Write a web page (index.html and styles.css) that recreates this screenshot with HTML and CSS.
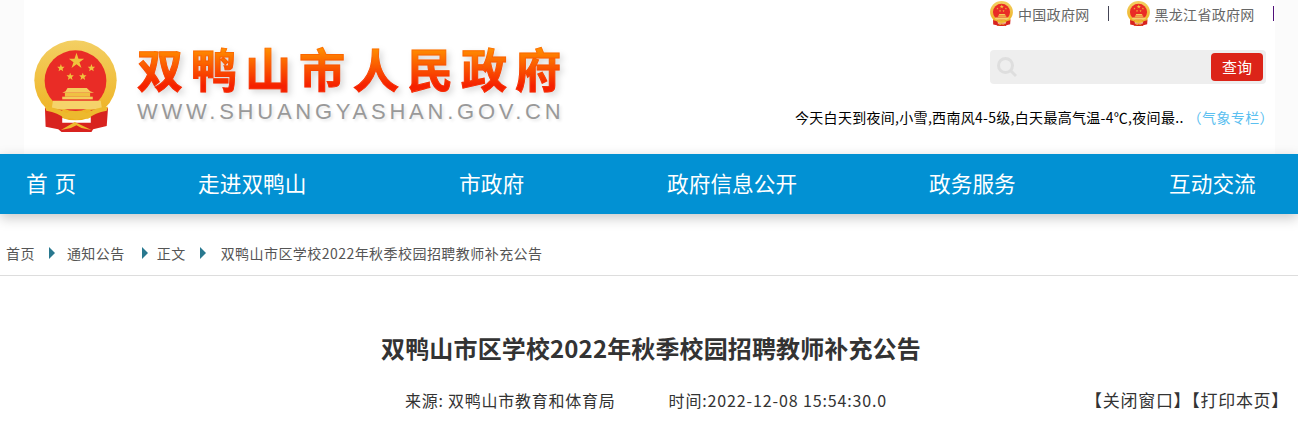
FILE: index.html
```html
<!DOCTYPE html>
<html lang="zh-CN">
<head>
    <meta charset="UTF-8">
    <meta name="viewport" content="width=device-width, initial-scale=1.0">
    <title>双鸭山市区学校2022年秋季校园招聘教师补充公告</title>
    <link rel="stylesheet" href="styles.css">
</head>
<body>
    <svg class="defs" width="0" height="0" aria-hidden="true">
        <defs>
            <linearGradient id="gold" x1="0" y1="0" x2="0" y2="1">
                <stop offset="0" stop-color="#f3cf63"/>
                <stop offset="1" stop-color="#eeb11f"/>
            </linearGradient>
            <symbol id="emblem" viewBox="27 14 250 276" preserveAspectRatio="none">
                <ellipse cx="152" cy="135" rx="124" ry="120" fill="url(#gold)"/>
                <ellipse cx="152" cy="136" rx="93" ry="91" fill="#e92c26"/>
                <path d="M60 218 L112 224 L112 262 L198 262 L198 224 L250 218 L246 272 L205 282 L200 290 L110 290 L100 282 L62 274 Z" fill="#d8231f"/>
                <path fill="#f0c23d" d="M155 52 L161 70 L178 70 L164 81 L170 98 L155 87 L140 98 L146 81 L132 70 L149 70 Z"/>
                <path fill="#f0c23d" d="M108 86 L111 94 L119 94 L113 100 L115 108 L108 103 L101 108 L103 100 L97 94 L105 94 Z"/>
                <path fill="#f0c23d" d="M200 86 L203 94 L211 94 L205 100 L207 108 L200 103 L193 108 L195 100 L189 94 L197 94 Z"/>
                <path fill="#f0c23d" d="M136 112 L139 120 L147 120 L141 126 L143 134 L136 129 L129 134 L131 126 L125 120 L133 120 Z"/>
                <path fill="#f0c23d" d="M174 112 L177 120 L185 120 L179 126 L181 134 L174 129 L167 134 L169 126 L163 120 L171 120 Z"/>
                <path fill="#f3cd5c" d="M128 158 L186 158 L196 168 L208 172 L112 172 L122 168 Z"/>
                <rect x="120" y="173" width="76" height="11" fill="#efc143"/>
                <rect x="112" y="184" width="92" height="8" fill="#f3cd5c"/>
                <path fill="#f5d36a" d="M84 196 L228 196 L232 222 L80 222 Z"/>
                <path fill="#edb92e" d="M60 214 Q95 214 125 234 Q140 222 155 230 Q170 222 186 234 Q215 214 250 214 L246 226 Q210 232 190 250 Q170 246 155 254 Q140 246 120 250 Q100 232 64 226 Z"/>
                <path fill="#edb92e" d="M108 284 L150 260 L200 284 L170 278 L155 270 L138 278 Z"/>
            </symbol>
        </defs>
    </svg>

    <div class="page-top">
        <header class="header">
            <div class="logo">
                <svg class="logo-emblem"><use href="#emblem"/></svg>
                <div class="logo-text">
                    <div class="logo-title">双鸭山市人民政府</div>
                    <div class="logo-url">WWW.SHUANGYASHAN.GOV.CN</div>
                </div>
            </div>
            <div class="tools">
                <div class="top-links">
                    <svg class="mini-emblem"><use href="#emblem"/></svg>
                    <a class="top-link">中国政府网</a>
                    <span class="top-sep"></span>
                    <svg class="mini-emblem"><use href="#emblem"/></svg>
                    <a class="top-link">黑龙江省政府网</a>
                    <span class="top-sep purple"></span>
                </div>
                <div class="search">
                    <svg class="search-icon" viewBox="0 0 20 20">
                        <circle cx="8.5" cy="8.5" r="7" fill="none" stroke="#dedede" stroke-width="3"/>
                        <path d="M13.5 13.5 L19 19" stroke="#dedede" stroke-width="3"/>
                    </svg>
                    <button class="search-btn">查询</button>
                </div>
                <div class="weather">今天白天到夜间,小雪,西南风4-5级,白天最高气温-4℃,夜间最..<a class="weather-link">（气象专栏）</a></div>
            </div>
        </header>
    </div>

    <nav class="nav">
        <a class="nav-home">首 页</a>
        <a>走进双鸭山</a>
        <a>市政府</a>
        <a>政府信息公开</a>
        <a>政务服务</a>
        <a>互动交流</a>
    </nav>

    <div class="crumbs">
        <a>首页</a><i class="arrow"></i>
        <a>通知公告</a><i class="arrow arrow-mid"></i>
        <a>正文</a><i class="arrow arrow-last"></i>
        <a>双鸭山市区学校2022年秋季校园招聘教师补充公告</a>
    </div>

    <h1 class="title">双鸭山市区学校2022年秋季校园招聘教师补充公告</h1>
    <div class="meta">
        <span class="meta-from">来源: 双鸭山市教育和体育局</span>
        <span class="meta-time">时间:2022-12-08 15:54:30.0</span>
        <span class="meta-tools">【关闭窗口】【打印本页】</span>
    </div>
</body>
</html>
```

FILE: styles.css
```css
* {
    box-sizing: border-box;
}

body {
    margin: 0;
    padding: 0;
    background-color: #fff;
    color: #333;
    font-family: "Noto Sans CJK SC", "Liberation Sans", sans-serif;
    overflow: hidden;
}

.defs {
    display: block;
    height: 0;
}

.page-top {
    background-color: #fbfbfb;
    height: 154px;
}

.header {
    display: flex;
    justify-content: space-between;
    width: 1251px;
    height: 154px;
    margin-left: 24px;
    background-color: #fff;
}

/* logo */
.logo {
    display: flex;
    padding: 40px 0 0 10px;
}

.logo-emblem {
    width: 83px;
    height: 92px;
}

.logo-text {
    margin-left: 20px;
}

.logo-title {
    height: 54px;
    font-size: 46px;
    line-height: 54px;
    font-weight: 700;
    letter-spacing: 8px;
    white-space: nowrap;
    color: transparent;
    -webkit-text-stroke: 1px rgba(250, 60, 0, 0.35);
    background: linear-gradient(180deg, #ff9000 15%, #f52000 85%);
    -webkit-background-clip: text;
    background-clip: text;
    filter: drop-shadow(3px 3px 3px rgba(0, 0, 0, 0.15));
}

.logo-url {
    margin-top: 5px;
    font-family: "Liberation Sans", sans-serif;
    font-size: 22px;
    line-height: 26px;
    letter-spacing: 3.75px;
    color: #999;
    white-space: nowrap;
    text-shadow: 2px 2px 3px rgba(0, 0, 0, 0.1);
}

/* right side */
.tools {
    display: flex;
    flex-direction: column;
    align-items: flex-end;
    padding-right: 9px;
}

.top-links {
    display: flex;
    align-items: center;
    width: 283px;
    height: 25px;
    margin-top: 1px;
    margin-right: -7px;
    font-size: 14px;
    letter-spacing: 0.3px;
    color: #666;
}

.mini-emblem {
    width: 23px;
    height: 25px;
    flex: none;
}

.top-link {
    margin-left: 5px;
    white-space: nowrap;
}

.top-sep {
    flex: none;
    width: 1px;
    height: 15px;
    margin: 0 18px;
    background-color: #445;
}

.top-sep.purple {
    background-color: #50107a;
}

.search {
    display: flex;
    align-items: center;
    justify-content: space-between;
    width: 276px;
    height: 34px;
    margin-top: 24px;
    padding: 0 3px 0 7px;
    background-color: #eee;
    border-radius: 4px;
}

.search-icon {
    width: 20px;
    height: 20px;
}

.search-btn {
    width: 52px;
    height: 28px;
    padding: 0;
    border: none;
    border-radius: 4px;
    background-color: #dc2418;
    color: #fff;
    font-family: inherit;
    font-size: 15px;
    line-height: 28px;
}

.weather {
    margin-top: 22px;
    margin-right: -8px;
    font-size: 14px;
    line-height: 22px;
    letter-spacing: 0.3px;
    color: #000;
    white-space: nowrap;
}

.weather-link {
    color: #5bc0f0;
    margin-left: 4px;
    letter-spacing: 0.4px;
}

/* nav */
.nav {
    display: grid;
    grid-template-columns: 172px 261px 208px 262px 240px auto;
    height: 60px;
    padding-left: 26px;
    background-color: #0291d3;
    box-shadow: 0 4px 12px rgba(0, 0, 0, 0.22);
    color: #fff;
    font-size: 21.7px;
    line-height: 58px;
    white-space: nowrap;
}

.nav-home {
    word-spacing: 2px;
}

/* breadcrumb */
.crumbs {
    display: flex;
    align-items: center;
    height: 62px;
    padding: 16px 0 0 6px;
    border-bottom: 1px solid #ddd;
    font-size: 14px;
    letter-spacing: 0.45px;
    color: #555;
    white-space: nowrap;
}

.arrow {
    width: 0;
    height: 0;
    margin: 0 12px 0 14px;
    border-left: 6px solid #29788f;
    border-top: 6px solid transparent;
    border-bottom: 6px solid transparent;
}

.arrow-mid {
    margin: 0 9px 0 17px;
}

.arrow-last {
    margin: 0 15px 0 14px;
}

/* article head */
.title {
    margin: 54px 0 0;
    padding-left: 4px;
    font-size: 24px;
    line-height: 36px;
    font-weight: 700;
    letter-spacing: 0.13px;
    text-align: center;
    color: #333;
}

.meta {
    display: flex;
    margin-top: 21px;
    padding: 0 9px 0 405px;
    font-size: 16px;
    line-height: 26px;
    white-space: nowrap;
}

.meta-from {
    letter-spacing: 0.75px;
}

.meta-time {
    margin-left: 53px;
    letter-spacing: 0.87px;
}

.meta-tools {
    margin-left: auto;
    font-size: 17px;
    letter-spacing: 0.7px;
}
```
